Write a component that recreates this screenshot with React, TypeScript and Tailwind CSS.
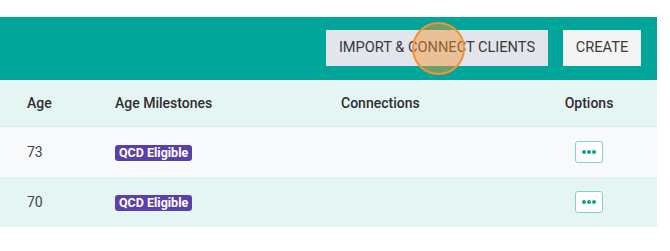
const rows = [
  { age: 73, milestone: "QCD Eligible", bg: "bg-[#f7f9fb]" },
  { age: 70, milestone: "QCD Eligible", bg: "bg-[#e5f5f4]" },
];

function OptionsButton() {
  return (
    <button className="w-[28px] h-[22px] rounded-[3px] border border-[#7dd3cb] bg-white flex items-center justify-center gap-[1.5px]">
      <span className="w-[3.5px] h-[3.5px] rounded-full bg-[#0fa196]" />
      <span className="w-[3.5px] h-[3.5px] rounded-full bg-[#0fa196]" />
      <span className="w-[3.5px] h-[3.5px] rounded-full bg-[#0fa196]" />
    </button>
  );
}

export default function App() {
  return (
    <div className="w-[670px] h-[251px] bg-white pt-[17px] font-['Roboto',sans-serif]">
      <div className="w-[657px]">
        <div className="relative h-[63px] bg-[#00a699] flex items-start justify-end gap-[15px] pt-[13px] pr-[16px]">
          <button className="h-[36px] w-[222px] bg-[#e2e5ec] text-[#3a3a3a] text-[14.6px]">
            IMPORT &amp; CONNECT CLIENTS
          </button>
          <button className="h-[36px] w-[78px] bg-[#f4f4f4] text-[#3a3a3a] text-[14.6px]">
            CREATE
          </button>
          <div className="absolute left-[412px] top-[5px] w-[53px] h-[53px] rounded-full border-2 border-[#f5922f] bg-[#f5922f]/45" />
        </div>

        <div className="grid grid-cols-[88px_226px_223px_50px] items-center pl-[27px] h-[47px] bg-[#e5f5f4] border-b border-[#dde5e5] text-[14px] font-medium text-[#2e2e2e]">
          <span>Age</span>
          <span>Age Milestones</span>
          <span>Connections</span>
          <span className="text-center">Options</span>
        </div>

        {rows.map((row) => (
          <div
            key={row.age}
            className={`grid grid-cols-[88px_226px_223px_50px] items-center pl-[27px] h-[50px] ${row.bg} text-[14px] text-[#444]`}
          >
            <span>{row.age}</span>
            <span>
              <span className="inline-block bg-[#5b3fad] text-white text-[12.5px] font-bold leading-[16px] px-[4px] rounded-[3px]">
                {row.milestone}
              </span>
            </span>
            <span />
            <span className="flex justify-center">
              <OptionsButton />
            </span>
          </div>
        ))}
      </div>
    </div>
  );
}
